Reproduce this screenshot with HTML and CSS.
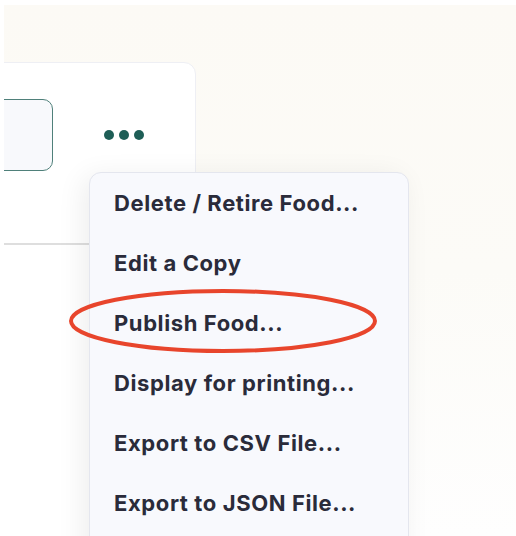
FILE: index.html
```html
<!DOCTYPE html>
<html lang="en">
<head>
  <meta charset="UTF-8">
  <title>Food actions</title>
  <link rel="stylesheet" href="styles.css">
</head>
<body>
  <div class="stage">
    <div class="card">
      <div class="card-head">
        <div class="search-box"></div>
        <button class="more" aria-label="More actions">
          <span class="dot"></span><span class="dot"></span><span class="dot"></span>
        </button>
      </div>
    </div>

    <ul class="menu">
      <li>Delete / Retire Food...</li>
      <li>Edit a Copy</li>
      <li>Publish Food...</li>
      <li>Display for printing...</li>
      <li>Export to CSV File...</li>
      <li>Export to JSON File...</li>
    </ul>

    <svg class="circle" width="312" height="66" viewBox="0 0 312 66">
      <ellipse cx="156" cy="33" rx="152" ry="30" fill="none" stroke="#e8452c" stroke-width="4"/>
    </svg>
  </div>
</body>
</html>
```

FILE: styles.css
```css
body {
  margin: 0;
  background-color: #fff;
  font-family: Inter, "Noto Sans", sans-serif;
}

.stage {
  position: relative;
  margin: 5px 0 0 4px;
  height: 531px;
  overflow: hidden;
  background: linear-gradient(#fcfaf5 0%, #fcfbf7 50%, #fefefe 100%);
}

.card {
  width: 392px;
  height: 600px;
  margin: 57px 0 0 -200px;
  background-color: #fff;
  border: 1px solid #eeeff4;
  border-radius: 0 12px 0 0;
  box-sizing: border-box;
}

.card-head {
  display: flex;
  align-items: center;
  padding: 36px 0 72px 0;
  border-bottom: 2px solid #dedede;
}

.search-box {
  width: 246px;
  height: 70px;
  border: 1.5px solid #4f807a;
  border-radius: 10px;
  background-color: #f8f9fc;
}

.more {
  display: flex;
  gap: 5px;
  margin-left: 51px;
  padding: 0;
  border: none;
  background: none;
}

.dot {
  width: 10px;
  height: 10px;
  border-radius: 50%;
  background-color: #1e5e56;
}

.menu {
  position: absolute;
  left: 85px;
  top: 167px;
  width: 320px;
  height: 420px;
  margin: 0;
  padding: 0;
  list-style: none;
  background-color: #f8f9fd;
  border: 1px solid #e4e6ee;
  border-radius: 12px;
  box-sizing: border-box;
  box-shadow: -6px 4px 28px rgba(0, 0, 0, 0.07);
}

.menu li {
  height: 60px;
  line-height: 60px;
  padding-left: 24px;
  font-size: 22px;
  font-weight: 700;
  letter-spacing: 0.6px;
  color: #2a2b3a;
}

.circle {
  position: absolute;
  left: 63px;
  top: 283px;
}
```
